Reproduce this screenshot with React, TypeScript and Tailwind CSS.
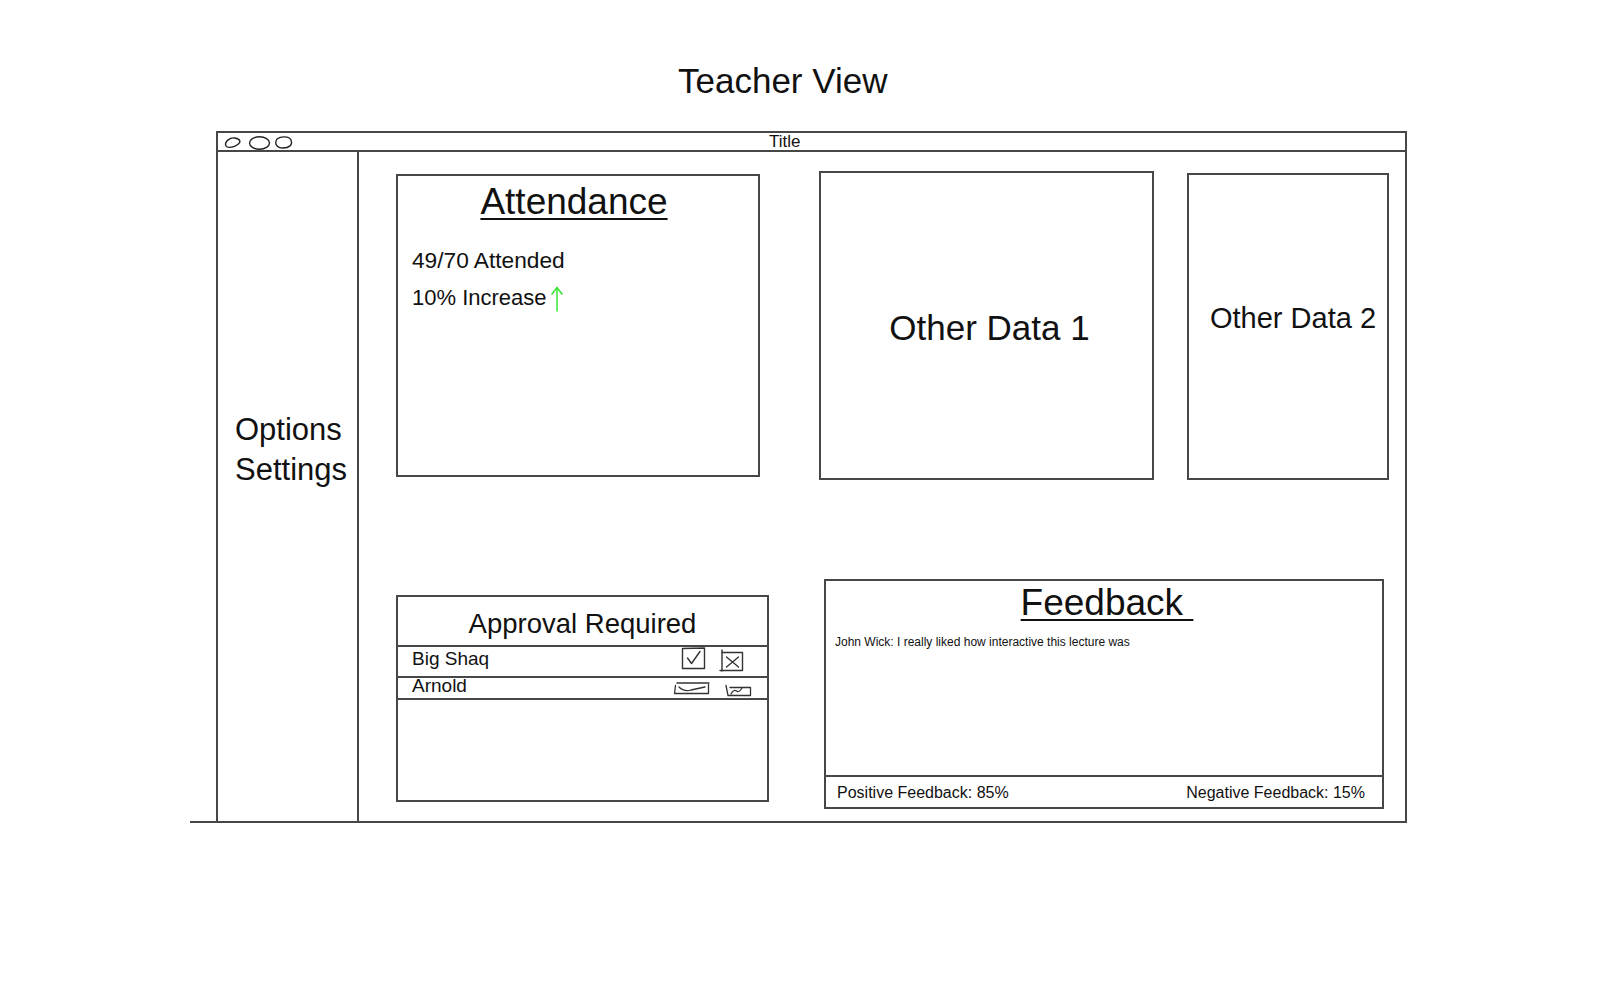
import React from "react";

const LINE = "border-[#474747]";

function CheckIcon() {
  return (
    <svg width="25" height="23" viewBox="0 0 25 23" fill="none" stroke="#333" strokeWidth="1.4" strokeLinecap="round" strokeLinejoin="round">
      <path d="M1.5 1.5 L23.5 1 L23.5 21.5 L1.5 21.5 Z" />
      <path d="M6.5 11 L10.5 16.5 L19 4.5" />
    </svg>
  );
}

function XIcon() {
  return (
    <svg width="26" height="24" viewBox="0 0 26 24" fill="none" stroke="#333" strokeWidth="1.4" strokeLinecap="round" strokeLinejoin="round">
      <path d="M3 1 V22" />
      <path d="M3 3.5 H23.5 V21.5 H1" />
      <path d="M7.5 8 L19.5 18 M19.5 8 L7.5 18" />
    </svg>
  );
}

function FlatCheckIcon() {
  return (
    <svg width="39" height="13" viewBox="0 0 39 13" fill="none" stroke="#333" strokeWidth="1.3" strokeLinecap="round" strokeLinejoin="round">
      <path d="M4 1 H36" />
      <path d="M2.5 3.5 L1.5 11.5 H35.5 V2.5" />
      <path d="M6 5 Q11 10 18 8 L32 5" />
    </svg>
  );
}

function FlatXIcon() {
  return (
    <svg width="27" height="13" viewBox="0 0 27 13" fill="none" stroke="#333" strokeWidth="1.3" strokeLinecap="round" strokeLinejoin="round">
      <path d="M1 1.5 L3 11.5 H25.5 V3.5 H5" />
      <path d="M6 10 Q8.5 5 11.5 7 Q14 9 17 4" />
    </svg>
  );
}

function UpArrow() {
  return (
    <svg width="12" height="26" viewBox="0 0 12 26" fill="none" stroke="#35e635" strokeWidth="1.5" strokeLinecap="round" strokeLinejoin="round">
      <path d="M6 25 V2" />
      <path d="M1 8 L6 1.5 L11 8" />
    </svg>
  );
}

function Dots() {
  return (
    <svg width="80" height="15" viewBox="0 0 80 15" fill="none" stroke="#222" strokeWidth="1.4">
      <path d="M3 11 C1 7 7 2 12 3 C17 4 19 7 14 10 C10 13 4 13 3 11 Z" />
      <ellipse cx="36.5" cy="8" rx="10" ry="6.2" />
      <path d="M54 4 C58 1 66 1 68 5 C70 10 66 13 60 13 C54 13 51 9 54 4 Z" />
    </svg>
  );
}

export default function App() {
  return (
    <div className="w-[1600px] h-[982px] bg-white text-[#111] font-['Liberation_Sans',Arial,sans-serif] overflow-hidden">
      <div className="pt-[61px] pl-[678px] text-[35px] leading-[40px]">Teacher View</div>

      <div className="mt-[30px] ml-[216px] w-[1191px] h-[692px] relative">
        <div className="absolute -left-[26px] bottom-0 w-[28px] h-[2px] bg-[#474747]" />
        <div className={`w-full h-full border-2 ${LINE} flex flex-col`}>
          {/* Title bar */}
          <div className={`h-[19px] border-b-2 ${LINE} flex items-center shrink-0`}>
            <div className="ml-[5px] mt-[1px]">
              <Dots />
            </div>
            <div className="ml-[466px] text-[17px] leading-[17px]">Title</div>
          </div>

          {/* Body */}
          <div className="flex flex-1">
            {/* Sidebar */}
            <div className={`w-[141px] border-r-2 ${LINE} pt-[258px] pl-[17px] text-[31px] leading-[40px] shrink-0`}>
              <div>Options</div>
              <div>Settings</div>
            </div>

            {/* Main */}
            <div className="flex-1 flex flex-col">
              {/* Row 1 */}
              <div className="flex items-start mt-[19px]">
                <div className={`ml-[37px] mt-[3px] w-[364px] h-[303px] border-2 ${LINE} shrink-0`}>
                  <div className="pt-[6px] pr-[8px] text-center text-[37px] leading-[40px] underline decoration-2 underline-offset-[4px]">
                    Attendance
                  </div>
                  <div className="mt-[19px] pl-[14px] leading-[38px]">
                    <div className="text-[22.7px]">49/70 Attended</div>
                    <div className="flex items-center text-[22px]">
                      <span>10% Increase</span>
                      <span className="ml-[4px] mt-[2px]">
                        <UpArrow />
                      </span>
                    </div>
                  </div>
                </div>

                <div className={`ml-[59px] w-[335px] h-[309px] border-2 ${LINE} flex items-center justify-center shrink-0`}>
                  <div className="text-[35px] leading-[40px] pl-[6px] pt-[4px]">Other Data 1</div>
                </div>

                <div className={`ml-[33px] mt-[2px] w-[202px] h-[307px] border-2 ${LINE} flex items-center shrink-0`}>
                  <div className="pl-[21px] pb-[18px] text-[29px] leading-[34px] whitespace-nowrap">Other Data 2</div>
                </div>
              </div>

              {/* Row 2 */}
              <div className="flex items-start mt-[99px]">
                <div className={`ml-[37px] mt-[16px] w-[373px] h-[207px] border-2 ${LINE} flex flex-col shrink-0`}>
                  <div className={`h-[50px] border-b-2 ${LINE} pt-[9px] text-center text-[27.5px] leading-[36px]`}>
                    Approval Required
                  </div>
                  <div className={`h-[31px] border-b-2 ${LINE} flex items-start`}>
                    <div className="pl-[14px] pt-[2px] text-[19px] leading-[19px]">Big Shaq</div>
                    <div className="ml-auto mr-[22px] flex items-start">
                      <CheckIcon />
                      <div className="ml-[13px] mt-[2px]">
                        <XIcon />
                      </div>
                    </div>
                  </div>
                  <div className={`h-[22px] border-b-2 ${LINE} flex items-start`}>
                    <div className="pl-[14px] text-[19px] leading-[14px] mt-[1px]">Arnold</div>
                    <div className="ml-auto mr-[15px] flex items-start">
                      <div className="mt-[4px]">
                        <FlatCheckIcon />
                      </div>
                      <div className="ml-[13px] mt-[6px]">
                        <FlatXIcon />
                      </div>
                    </div>
                  </div>
                </div>

                <div className={`ml-[55px] w-[560px] h-[230px] border-2 ${LINE} flex flex-col shrink-0`}>
                  <div className="flex-1">
                    <div className="pt-[2px] pl-[6px] text-center text-[37px] leading-[40px]">
                      <span className="underline decoration-2 underline-offset-[4px]">Feedback&nbsp;</span>
                    </div>
                    <div className="mt-[11px] pl-[9px] text-[12px] leading-[16px]">
                      John Wick: I really liked how interactive this lecture was
                    </div>
                  </div>
                  <div className={`h-[32px] border-t-2 ${LINE} flex items-center justify-between pl-[11px] pr-[17px] text-[16px] leading-[29px]`}>
                    <span>Positive Feedback: 85%</span>
                    <span>Negative Feedback: 15%</span>
                  </div>
                </div>
              </div>
            </div>
          </div>
        </div>
      </div>
    </div>
  );
}
